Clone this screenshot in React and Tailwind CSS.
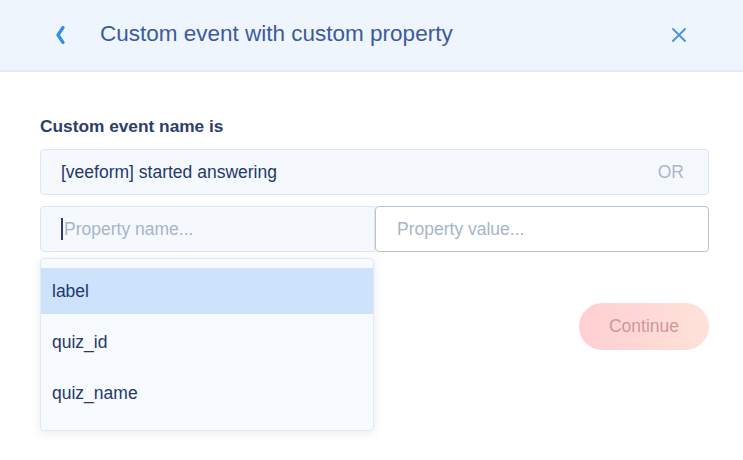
import React from "react";

export default function App() {
  const font = { fontFamily: '"Liberation Sans", Arial, sans-serif' };
  return (
    <div className="w-[743px] h-[460px] bg-white overflow-hidden" style={font}>
      <div className="h-[72px] bg-[#eef5fd] border-b-2 border-[#e4ebf3] flex items-center">
        <div className="w-[100px] flex justify-start pl-[54px]">
          <svg width="12" height="18" viewBox="0 0 12 18">
            <path d="M9 1.5 L4 9 L9 16.5" fill="none" stroke="#2f8ff0" strokeWidth="3.2" strokeLinecap="round" strokeLinejoin="round" />
          </svg>
        </div>
        <div className="text-[22.5px] text-[#3d5b9b] flex-1 -mt-[3px]">Custom event with custom property</div>
        <div className="pr-[57px]">
          <svg width="14" height="14" viewBox="0 0 14 14">
            <path d="M1 1 L13 13 M13 1 L1 13" stroke="#4a90e2" strokeWidth="1.8" strokeLinecap="round" />
          </svg>
        </div>
      </div>
      <div className="px-[40px] pt-[43px]">
        <div className="text-[17.3px] font-bold text-[#2c3d6e] leading-[22px]">Custom event name is</div>
        <div className="mt-[12px] h-[46px] w-[669px] bg-[#f5f9fe] border border-[#dfe7f2] rounded-[4px] flex items-center justify-between pl-[20px] pr-[24px]">
          <span className="text-[17.5px] text-[#24386b]">[veeform] started answering</span>
          <span className="text-[17.5px] text-[#a8b8ca]">OR</span>
        </div>
        <div className="mt-[11px] flex w-[669px]">
          <div className="relative w-[335px]">
            <div className="h-[46px] bg-[#f5f9fe] border border-[#dde6f1] rounded-l-[4px] flex items-center pl-[20px]">
              <span className="w-[2px] h-[22px] bg-[#2b3c70] mr-[1px]"></span>
              <span className="text-[17.5px] text-[#a7b5c9]">Property name...</span>
            </div>
            <div className="absolute left-0 top-[52px] w-[334px] bg-[#f7faff] border border-[#e1e9f3] rounded-[4px] shadow-[0_2px_10px_rgba(120,140,170,0.18)] pt-[9px] pb-[14px] flex flex-col gap-[5px]">
              <div className="h-[46px] bg-[#cde3fc] flex items-center pl-[11px] text-[17.5px] text-[#24386b]">label</div>
              <div className="h-[46px] flex items-center pl-[11px] text-[17.5px] text-[#24386b]">quiz_id</div>
              <div className="h-[46px] flex items-center pl-[11px] text-[17.5px] text-[#24386b]">quiz_name</div>
            </div>
          </div>
          <div className="flex-1 h-[46px] bg-white border border-[#b5c3d5] rounded-[4px] flex items-center pl-[21px]">
            <span className="text-[17.5px] text-[#a7b5c9]">Property value...</span>
          </div>
        </div>
        <div className="flex justify-end w-[669px] mt-[51px]">
          <div className="w-[130px] h-[47px] rounded-full bg-gradient-to-r from-[#ffcfd3] to-[#ffe2d9] flex items-center justify-center text-[17.5px] text-[#d2979d]">Continue</div>
        </div>
      </div>
    </div>
  );
}
